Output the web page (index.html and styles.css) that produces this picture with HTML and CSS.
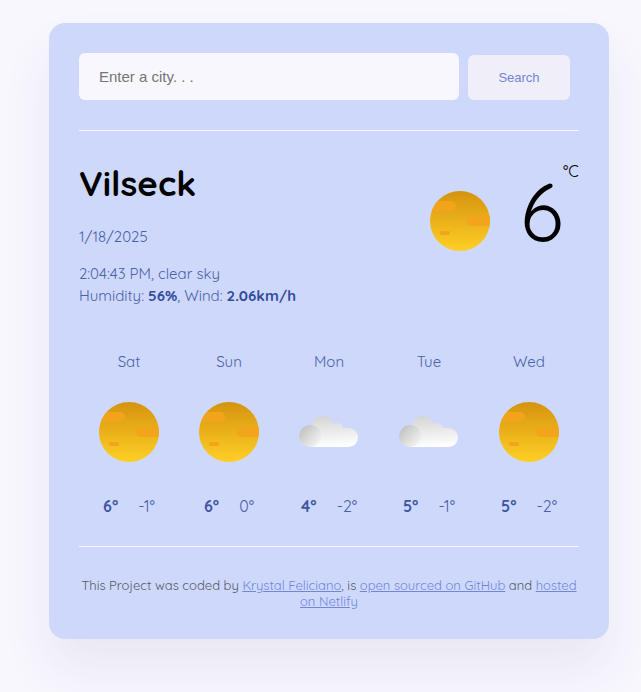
FILE: index.html
```html
<!DOCTYPE html>
<html lang="en">
<head>
<meta charset="utf-8">
<title>Weather</title>
<link rel="stylesheet" href="styles.css">
</head>
<body>
<svg class="defs" width="0" height="0" aria-hidden="true">
  <defs>
    <linearGradient id="sunFill" x1="0" y1="0" x2="0" y2="1"><stop offset="0" stop-color="#d5930f"/><stop offset="1" stop-color="#ffcf25"/></linearGradient>
    <linearGradient id="cloudFill" gradientUnits="userSpaceOnUse" x1="28" y1="14" x2="30" y2="45"><stop offset="0" stop-color="#d5d5d5"/><stop offset="1" stop-color="#ffffff"/></linearGradient>
    <linearGradient id="puffFill" gradientUnits="userSpaceOnUse" x1="3" y1="27" x2="19" y2="42"><stop offset="0" stop-color="#c4c4c4"/><stop offset="1" stop-color="#f2f2f2"/></linearGradient>
    <clipPath id="sunClip"><circle cx="30" cy="30" r="30"/></clipPath>
    <symbol id="sun" viewBox="0 0 60 60">
      <circle cx="30" cy="30" r="30" fill="url(#sunFill)"/>
      <g fill="#f2a51a" clip-path="url(#sunClip)">
        <rect x="-6" y="10" width="32" height="10" rx="5"/>
        <rect x="37" y="25" width="32" height="10" rx="5"/>
        <rect x="10" y="40" width="10" height="4" rx="2"/>
      </g>
    </symbol>
    <symbol id="cloud" viewBox="0 0 60 60">
      <g fill="url(#cloudFill)">
        <circle cx="24" cy="25.200" r="11.200"/>
        <circle cx="38.700" cy="26.500" r="5.500"/>
        <path d="M12 26H49.500A9.500 9.500 0 0 1 49.500 45H11Z"/>
      </g>
      <circle cx="11.200" cy="34" r="11" fill="url(#puffFill)"/>
    </symbol>
  </defs>
</svg>
<main class="card">
  <form class="search">
    <input class="search-input" type="search" placeholder="Enter a city. . .">
    <button class="search-button" type="button">Search</button>
  </form>
  <section class="current">
    <div class="details">
      <h1 class="city">Vilseck</h1>
      <p class="date">1/18/2025</p>
      <p class="condition">2:04:43 PM, clear sky</p>
      <p class="humidity">Humidity: <strong>56%</strong>, Wind: <strong>2.06km/h</strong></p>
    </div>
    <div class="temperature">
      <svg class="icon"><use href="#sun"/></svg>
      <span class="value">6</span>
      <span class="unit">°C</span>
    </div>
  </section>
  <section class="forecast">
    <div class="day"><span class="name">Sat</span><svg class="icon"><use href="#sun"/></svg><div class="range"><strong>6°</strong><span>-1°</span></div></div>
    <div class="day"><span class="name">Sun</span><svg class="icon"><use href="#sun"/></svg><div class="range"><strong>6°</strong><span>0°</span></div></div>
    <div class="day"><span class="name">Mon</span><svg class="icon"><use href="#cloud"/></svg><div class="range"><strong>4°</strong><span>-2°</span></div></div>
    <div class="day"><span class="name">Tue</span><svg class="icon"><use href="#cloud"/></svg><div class="range"><strong>5°</strong><span>-1°</span></div></div>
    <div class="day"><span class="name">Wed</span><svg class="icon"><use href="#sun"/></svg><div class="range"><strong>5°</strong><span>-2°</span></div></div>
  </section>
  <footer class="footer">This Project was coded by <a href="#">Krystal Feliciano</a>, is <a href="#">open sourced on GitHub</a> and <a href="#">hosted<br>on Netlify</a></footer>
</main>
</body>
</html>
```
FILE: styles.css
```css
* { box-sizing: border-box; }
html { background: #f8f7fe; }
body {
  display: flow-root;
  min-height: 692px;
  margin: 0;
  font-family: Quicksand, Lato, sans-serif;
}
.defs { position: absolute; }
.card {
  width: 560px;
  height: 616px;
  margin: 23px 0 0 49px;
  padding: 30px;
  border-radius: 16px;
  background: #ced8fb;
  box-shadow: 0 30px 50px rgba(65, 50, 100, 0.08);
}
.search {
  display: flex;
  align-items: flex-end;
  gap: 9px;
  height: 78px;
  padding-bottom: 30px;
  border-bottom: 1px solid #f8f7fe;
}
.search-input {
  width: 380px;
  height: 47px;
  padding: 0 20px;
  border: 0;
  border-radius: 6px;
  appearance: none;
  background: #f8f7fe;
  font: 15px "Liberation Sans", sans-serif;
}
.search-input::placeholder { color: #757575; }
.search-button {
  width: 102px;
  height: 45px;
  padding: 0;
  border: 0;
  border-radius: 6px;
  background: #f0eff9;
  color: #7086d8;
  font: 13px "Liberation Sans", sans-serif;
}
.current {
  display: flex;
  justify-content: space-between;
  height: 220px;
  padding-top: 30px;
}
.city { margin: 0 0 21px; padding-top: 1px; font-size: 35px; line-height: 43px; font-weight: 700; }
.date, .condition, .humidity { margin: 0; font-size: 15px; line-height: 22px; color: #4a61a8; }
.date { margin-bottom: 15px; }
.humidity strong { color: #334b9f; font-weight: 700; }
.temperature { display: flex; height: 100px; }
.temperature .icon { margin: 30px 30px 0 0; }
.icon { display: block; width: 60px; height: 60px; }
.value { width: 43px; margin-top: 1px; font-size: 80px; line-height: 98px; }
.unit { width: 16px; font-size: 16px; line-height: 20px; white-space: nowrap; }
.forecast {
  display: grid;
  grid-template-columns: repeat(5, 100px);
  height: 196px;
  border-bottom: 1px solid #f8f7fe;
}
.day {
  display: flex;
  flex-direction: column;
  align-items: center;
  color: #4a61a8;
  font-size: 16px;
  line-height: 20px;
}
.name { padding-top: 1px; font-size: 15px; }
.day .icon { margin: 30px 0 34px; }
.range { display: flex; gap: 20px; }
.range strong { font-weight: 700; color: #3f57a3; }
.footer {
  padding-top: 30px;
  text-align: center;
  font-size: 13px;
  line-height: 16px;
  color: #555866;
  white-space: nowrap;
}
.footer a { color: #7086d8; }
```
